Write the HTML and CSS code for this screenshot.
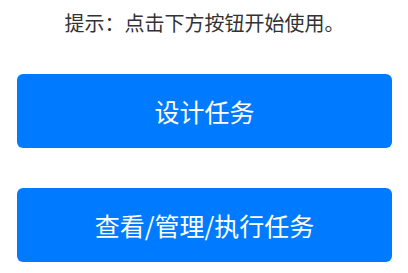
FILE: index.html
```html
<!DOCTYPE html>
<html lang="zh-CN">
<head>
<meta charset="utf-8">
<title>任务</title>
<link rel="stylesheet" href="styles.css">
</head>
<body>
<main class="page">
  <p class="hint">提示：点击下方按钮开始使用。</p>
  <div class="actions">
    <button class="btn" type="button">设计任务</button>
    <button class="btn" type="button">查看/管理/执行任务</button>
  </div>
</main>
</body>
</html>
```

FILE: styles.css
```css
html, body {
  margin: 0;
  padding: 0;
  background: #ffffff;
}
.page {
  display: flex;
  flex-direction: column;
  padding: 8px 16px 0 17px;
  font-family: "Noto Sans CJK SC", "Noto Sans", sans-serif;
}
.hint {
  margin: 0;
  text-align: center;
  font-size: 20px;
  line-height: 30px;
  color: #333333;
}
.actions {
  display: flex;
  flex-direction: column;
  gap: 40px;
  margin-top: 36px;
}
.btn {
  display: flex;
  align-items: center;
  justify-content: center;
  height: 74px;
  width: 100%;
  border: none;
  border-radius: 6px;
  background: #007bff;
  color: #ffffff;
  font-family: "Noto Sans CJK SC", "Noto Sans", sans-serif;
  font-size: 25px;
  padding: 0;
}
```
